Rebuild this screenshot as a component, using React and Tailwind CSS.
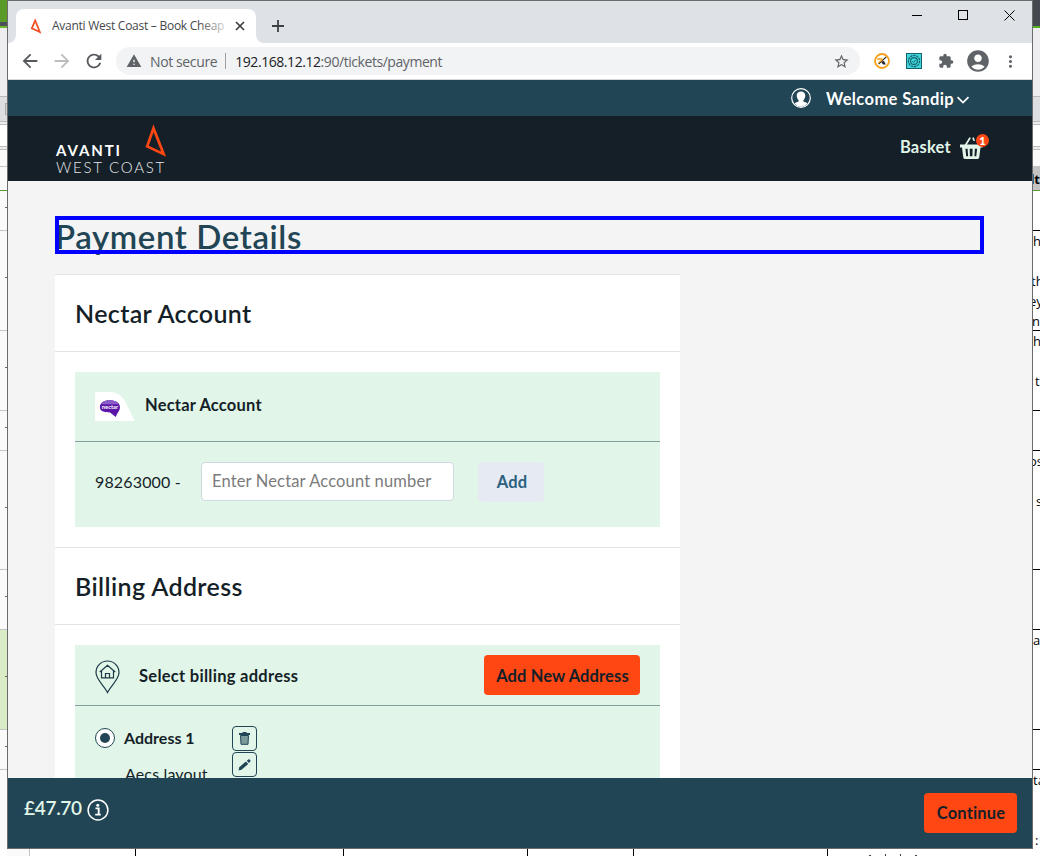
import React from 'react';
import {
  MdArrowBack,
  MdArrowForward,
  MdRefresh,
  MdWarning,
  MdStarBorder,
  MdExtension,
  MdAccountCircle,
  MdMoreVert,
} from 'react-icons/md';

/* ---------- spreadsheet visible behind the browser window ---------- */

const LEFT_ROWS = [
  ['h-[22px]', 'bg-[#5a9a28]'],
  ['h-[4px]', 'bg-[#4b4f57]'],
  ['h-[2px]', 'bg-[#6cb52d]'],
  ['h-[68px]', 'bg-[#ededef]'],
  ['h-[1px]', 'bg-[#b9b9bb]'],
  ['h-[24px]', 'bg-[#dddee2]'],
  ['h-[1px]', 'bg-[#bcbcbe]'],
  ['h-[2px]', 'bg-[#ececee]'],
  ['h-[1px]', 'bg-[#bcbcbe]'],
  ['h-[21px]', 'bg-white'],
  ['h-[1px]', 'bg-[#bcbcbe]'],
  ['h-[2px]', 'bg-[#ececee]'],
  ['h-[1px]', 'bg-[#bcbcbe]'],
  ['h-[16px]', 'bg-[#fafafa]'],
  ['h-[1px]', 'bg-[#c4c4c4]'],
  ['h-[23px]', 'bg-[#fafafa]'],
  ['h-[1px]', 'bg-[#5a9a28]'],
  ['h-[39px]', 'bg-[#fafafa]'],
  ['h-[1px]', 'bg-[#c4c4c4]'],
  ['h-[99px]', 'bg-[#fafafa]'],
  ['h-[1px]', 'bg-[#c4c4c4]'],
  ['h-[79px]', 'bg-[#fafafa]'],
  ['h-[1px]', 'bg-[#c4c4c4]'],
  ['h-[39px]', 'bg-[#fafafa]'],
  ['h-[1px]', 'bg-[#c4c4c4]'],
  ['h-[118px]', 'bg-[#fafafa]'],
  ['h-[1px]', 'bg-[#c4c4c4]'],
  ['h-[59px]', 'bg-[#fafafa]'],
  ['h-[1px]', 'bg-[#c4c4c4]'],
  ['h-[99px]', 'bg-[#d9ecc6]'],
  ['h-[1px]', 'bg-[#c4c4c4]'],
  ['h-[39px]', 'bg-[#fafafa]'],
  ['h-[1px]', 'bg-[#c4c4c4]'],
  ['h-[79px]', 'bg-[#fafafa]'],
];

const RIGHT_ROWS = [
  ['h-[26px]', 'bg-[#444950]'],
  ['h-[2px]', 'bg-[#56b01e]'],
  ['h-[68px]', 'bg-[#ededef]'],
  ['h-[1px]', 'bg-[#b9b9bb]'],
  ['h-[24px]', 'bg-[#dddee2]'],
  ['h-[1px]', 'bg-[#bcbcbe]'],
  ['h-[2px]', 'bg-[#ececee]'],
  ['h-[1px]', 'bg-[#bcbcbe]'],
  ['h-[21px]', 'bg-white'],
  ['h-[1px]', 'bg-[#bcbcbe]'],
  ['h-[2px]', 'bg-[#ececee]'],
  ['h-[1px]', 'bg-[#bcbcbe]'],
  ['h-[16px]', 'bg-[#fafafa]'],
  ['h-[24px]', 'bg-[#c3c3c3]'],
  ['h-[1px]', 'bg-[#5a9a28]'],
  ['h-[39px]', 'bg-white'],
  ['h-[1px]', 'bg-black'],
  ['h-[99px]', 'bg-white'],
  ['h-[1px]', 'bg-black'],
  ['h-[79px]', 'bg-white'],
  ['h-[1px]', 'bg-black'],
  ['h-[39px]', 'bg-white'],
  ['h-[1px]', 'bg-black'],
  ['h-[118px]', 'bg-white'],
  ['h-[1px]', 'bg-black'],
  ['h-[59px]', 'bg-white'],
  ['h-[1px]', 'bg-black'],
  ['h-[99px]', 'bg-white'],
  ['h-[1px]', 'bg-black'],
  ['h-[39px]', 'bg-white'],
  ['h-[1px]', 'bg-black'],
  ['h-[79px]', 'bg-white'],
];

const ROW_MARKS = [
  'top-[207px]', 'top-[277px]', 'top-[367px]', 'top-[427px]',
  'top-[507px]', 'top-[596px]', 'top-[676px]', 'top-[746px]',
];

const CELL_TEXT = [
  ['lt', 'top-[170px] right-0 font-bold'],
  ['h', 'top-[232px] left-0'],
  ['th', 'top-[272px] left-[-2px]'],
  ['ey', 'top-[292px] left-[-4px]'],
  ['n', 'top-[312px] left-[-1px]'],
  ['h', 'top-[332px] left-0'],
  ['t', 'top-[372px] left-[2px]'],
  ['os', 'top-[452px] left-[-4px]'],
  ['s', 'top-[492px] left-[3px]'],
  ['a', 'top-[631px] left-0'],
  ['ta', 'top-[771px] left-0'],
  [':', 'top-[831px] left-[2px]'],
];

function Rows({ rows }) {
  return rows.map(([h, bg], i) => <div key={i} className={`${h} ${bg} shrink-0`} />);
}

function SheetLeft() {
  return (
    <div className="relative flex w-[7px] shrink-0 flex-col overflow-hidden">
      <Rows rows={LEFT_ROWS} />
      <div className="absolute left-[5px] top-[103px] h-3 w-1 border border-[#a9a9ab] bg-[#cfcfd2]" />
      {ROW_MARKS.map((top) => (
        <div key={top} className={`absolute left-[5px] h-px w-[2px] bg-[#6d6552] ${top}`} />
      ))}
    </div>
  );
}

function SheetRight() {
  return (
    <div className="relative flex w-[7px] shrink-0 flex-col overflow-hidden">
      <Rows rows={RIGHT_ROWS} />
      {CELL_TEXT.map(([t, cls], i) => (
        <span
          key={i}
          className={`absolute whitespace-nowrap font-['Open_Sans',sans-serif] text-[13px] leading-[18px] text-black ${cls}`}
        >
          {t}
        </span>
      ))}
    </div>
  );
}

function SheetBottom() {
  return (
    <div className="flex h-[7px] bg-white">
      <div className="w-[22px] bg-[#fafafa]" />
      <div className="w-px bg-[#c4c4c4]" />
      <div className="w-[105px]" />
      <div className="w-px bg-black" />
      <div className="w-[207px]" />
      <div className="w-px bg-black" />
      <div className="w-[183px]" />
      <div className="w-px bg-black" />
      <div className="w-[105px]" />
      <div className="w-px bg-black" />
      <div className="w-[193px]" />
      <div className="w-px bg-black" />
      <div className="flex items-end gap-[14px] pl-[41px]">
        <div className="h-px w-[2px] bg-[#444]" />
        <div className="h-[2px] w-px bg-[#444]" />
        <div className="h-[2px] w-px bg-[#444]" />
        <div className="h-px w-[2px] bg-[#444]" />
      </div>
    </div>
  );
}

/* ---------- browser chrome ---------- */

function Flare({ flip }) {
  return (
    <svg
      width="8"
      height="8"
      viewBox="0 0 8 8"
      className={flip ? 'absolute -right-2 bottom-0 -scale-x-100' : 'absolute -left-2 bottom-0'}
    >
      <path d="M8 0v8H0a8 8 0 0 0 8-8z" fill="#fff" />
    </svg>
  );
}

function TabStrip() {
  return (
    <div className="flex h-[42px] shrink-0 bg-[#dee1e6] pl-2">
      <div className="relative mt-2 flex w-60 items-center rounded-t-lg bg-white">
        <Flare />
        <svg width="12" height="18" viewBox="0 0 12 18" className="ml-[14px]" fill="none" stroke="#f4502a" strokeWidth="1.8">
          <path d="M5.2 3.5 9.8 15 1.8 11.4z" />
        </svg>
        <div className="relative ml-[10px] w-[174px] overflow-hidden whitespace-nowrap font-['Open_Sans',sans-serif] text-[12px] leading-[18px] tracking-[-0.26px] text-[#45474a]">
          Avanti West Coast – Book Cheap
          <div className="absolute inset-y-0 right-0 w-7 bg-gradient-to-r from-transparent to-white/80" />
        </div>
        <svg width="10" height="10" viewBox="0 0 10 10" className="ml-[9px]" stroke="#3c4043" strokeWidth="1.7">
          <path d="M1 1l8 8M9 1L1 9" />
        </svg>
        <Flare flip />
      </div>
      <svg width="12" height="12" viewBox="0 0 12 12" className="ml-4 mt-[19px]" stroke="#3c4043" strokeWidth="1.8">
        <path d="M6 0v12M0 6h12" />
      </svg>
      <div className="ml-auto flex h-7">
        <div className="flex w-[46px] items-center justify-center">
          <div className="h-px w-[10px] bg-black" />
        </div>
        <div className="flex w-[46px] items-center justify-center">
          <div className="size-[10px] border border-black" />
        </div>
        <div className="flex w-[46px] items-center justify-center">
          <svg width="11" height="11" viewBox="0 0 11 11" stroke="#000" strokeWidth="1">
            <path d="M.5.5l10 10M10.5.5l-10 10" />
          </svg>
        </div>
      </div>
    </div>
  );
}

function Slot({ children }) {
  return <div className="flex w-8 shrink-0 items-center justify-center">{children}</div>;
}

function Toolbar() {
  return (
    <div className="flex h-[37px] shrink-0 items-center border-b border-[#d5d7da] bg-white px-[6px] text-[#5f6368]">
      <Slot><MdArrowBack size={22} color="#55585d" /></Slot>
      <Slot><MdArrowForward size={22} color="#babcbe" /></Slot>
      <Slot><MdRefresh size={22} color="#55585d" /></Slot>
      <div className="mx-[6px] flex h-7 flex-1 items-center rounded-full bg-[#f1f3f4] pl-[10px] pr-[10px] font-['Open_Sans',sans-serif] text-[14px]">
        <MdWarning size={16} />
        <span className="ml-2 tracking-[-0.38px]">Not secure</span>
        <div className="ml-[8px] h-4 w-px bg-[#9aa0a6]" />
        <span className="ml-[9px] tracking-[-0.44px]">
          <span className="text-[#202124]">192.168.12.12</span>:90/tickets/payment
        </span>
        <MdStarBorder size={17} className="ml-auto" />
      </div>
      <Slot>
        <svg width="16" height="16" viewBox="0 0 16 16">
          <circle cx="8" cy="8" r="7" fill="#fff" stroke="#f9a01b" strokeWidth="1.8" />
          <path d="M3.200 6h5.200" stroke="#f9a01b" strokeWidth="1.6" />
          <path d="M12.300 3.800 4.600 11" stroke="#222" strokeWidth="1.1" />
          <path d="M7.200 8.800 10 8l1.800 3.400H9z" fill="#222" />
          <path d="M4.400 9.800 8.600 6.600" stroke="#f9a01b" strokeWidth="1.2" />
        </svg>
      </Slot>
      <Slot>
        <svg width="16" height="16" viewBox="0 0 16 16">
          <rect x=".5" y=".5" width="15" height="15" fill="#3fd6dc" stroke="#17606b" />
          <circle cx="8" cy="8" r="5.6" fill="none" stroke="#17606b" strokeWidth="1.2" strokeDasharray="2.4 .7" />
          <circle cx="8" cy="8" r="3.4" fill="none" stroke="#17606b" strokeWidth="1.1" />
          <path d="M6.4 8.2 7.6 9.4 9.8 6.8" fill="none" stroke="#17606b" />
        </svg>
      </Slot>
      <Slot><MdExtension size={16} /></Slot>
      <Slot><MdAccountCircle size={26} /></Slot>
      <Slot><MdMoreVert size={19} /></Slot>
    </div>
  );
}

/* ---------- Avanti site ---------- */

function UserIcon() {
  return (
    <svg width="20" height="20" viewBox="0 0 20 20">
      <circle cx="10" cy="10" r="9.3" fill="none" stroke="#fff" strokeWidth="1.2" />
      <path
        fill="#fff"
        d="M10 3.600c2.700 0 4.400 1.700 4.300 4.200 0 1.900-.9 3.400-1.900 4.400v1.400c1.300.7 2.900.9 4 1.900-1.500 2-3.900 3.300-6.400 3.300s-4.900-1.300-6.400-3.300c1.100-1 2.700-1.200 4-1.900v-1.400C6.600 11.200 5.700 9.700 5.700 7.800c-.1-2.500 1.600-4.200 4.300-4.200z"
      />
    </svg>
  );
}

function WelcomeBar() {
  return (
    <div className="flex h-9 shrink-0 items-center justify-end bg-[#214554] pr-[62px] text-white">
      <UserIcon />
      <span className="ml-[15px] mt-px text-[16.5px] font-bold leading-6 tracking-[0.38px]">Welcome Sandip</span>
      <svg width="14" height="8" viewBox="0 0 14 8" className="ml-[2px] mt-[3px]" fill="none" stroke="#fff" strokeWidth="1.7">
        <path d="M1.500 1.200 7 6.500l5.500-5.300" />
      </svg>
    </div>
  );
}

function BasketIcon() {
  return (
    <svg width="24" height="24" viewBox="0 0 24 24" fill="none">
      <path d="M5.300 9.500 9.800 2.200M13.200 2.200l.8 2" stroke="#e1f5e8" strokeWidth="1.700" strokeLinecap="round" />
      <path
        fill="#e1f5e8"
        fillRule="evenodd"
        d="M0 8.400h22.500v3H20.500l-1.300 10.200c-.1.900-.7 1.400-1.600 1.400H4.900c-.9 0-1.500-.5-1.600-1.400L2 11.400H0zM5.400 12.700l.8 7.600h1.900l-.5-7.600zm4.300 0 .2 7.600h2.500l.2-7.600zm5.200 0-.5 7.600h1.900l.8-7.600z"
      />
    </svg>
  );
}

function NavBar() {
  return (
    <div className="flex h-[65px] shrink-0 justify-between bg-[#151f28] pl-12 pr-[48px] text-white">
      <div className="relative mt-[26px] w-[111px] text-[15px] leading-4">
        <div className="font-bold tracking-[1.9px]">AVANTI</div>
        <div className="whitespace-nowrap pt-px font-light tracking-[1.750px] text-[#e6e8e9]">WEST COAST</div>
        <svg width="22" height="34" viewBox="0 0 22 34" className="absolute -top-[18px] left-[89px]" fill="none" stroke="#ff4713" strokeWidth="2.700">
          <path d="M8.500 4.200 18.700 30.200 2.200 22.400z" />
        </svg>
      </div>
      <div className="relative mt-[20px] flex h-6 text-[#e1f5e8]">
        <span className="text-[16.5px] font-bold leading-[23px] tracking-[0.25px]">Basket</span>
        <span className="ml-[9px]"><BasketIcon /></span>
        <span className="absolute -right-[5px] -top-[2px] flex size-[13px] items-center justify-center rounded-full bg-[#ff4713] text-[11px] font-black leading-none text-white">
          1
        </span>
      </div>
    </div>
  );
}

function SectionTitle({ children, className }) {
  return (
    <div className={`flex h-[78px] items-center border-y border-[#e4e4e4] pl-5 text-[25px] font-semibold ${className}`}>
      {children}
    </div>
  );
}

function NectarLogo() {
  return (
    <div className="flex h-[29px] w-10 items-center">
      <svg width="40" height="29" viewBox="0 0 40 29">
        <path d="M0 0h15c8 0 12.500 4 16.500 12L39.800 29H0z" fill="#fff" />
        <path
          d="M14.500 8.200c6 0 10.500 2.600 10.500 7 0 2.600-1.600 4.600-2.700 6.300L20.700 25l-5.600-4.600c-6 0-10.200-1-10.200-5.400 0-4.200 4-6.800 9.600-6.800z"
          fill="#5b16a8"
        />
        <path d="M14.500 8.200c4.500 0 8 1.400 9.600 4H5.700c1.600-2.600 4.900-4 8.800-4z" fill="#8a5cc6" />
        <text x="6.800" y="17.200" fontSize="5.800" fontWeight="700" fill="#fff" fontFamily="Lato, sans-serif">nectar</text>
      </svg>
    </div>
  );
}

function NectarPanel() {
  return (
    <div className="px-5 py-5">
      <div className="h-[155px] bg-[#e1f5e8]">
        <div className="flex h-[70px] items-center border-b border-[#819f9c] pl-5">
          <NectarLogo />
          <span className="mb-[4px] ml-[10px] text-[16.5px] font-bold tracking-[0.2px]">Nectar Account</span>
        </div>
        <div className="flex items-start pl-5 pt-5">
          <span className="w-[106px] pt-2 tracking-[0.15px]">98263000 -</span>
          <input
            placeholder="Enter Nectar Account number"
            className="h-[39px] w-[253px] rounded border border-[#ced9e2] bg-white px-[10px] pb-px text-[16.5px] tracking-[0.15px] outline-none placeholder:text-[#7b7b7b]"
          />
          <button className="ml-6 h-10 w-[66px] rounded bg-[#e6eaf3] pb-px pl-[2px] text-[16.5px] font-bold tracking-[0.2px] text-[#2b617f]">
            Add
          </button>
        </div>
      </div>
    </div>
  );
}

function PinIcon() {
  return (
    <svg width="26" height="34" viewBox="0 0 26 34" className="mt-1" fill="none" stroke="#1c3a48" strokeWidth="1.200">
      <path d="M12.500 32.500C9.500 26 1 19.500 1 12.500a11.500 11.500 0 0 1 23 0c0 7-8.500 13.500-11.500 20z" />
      <path d="M4.800 12 12.500 5.200 20.200 12M6.500 11v6.800h12V11M10.500 17.800v-4.300h4v4.300" />
    </svg>
  );
}

function IconButton({ children }) {
  return (
    <button className="flex size-[25px] items-center justify-center rounded border border-[#214554]">{children}</button>
  );
}

function BillingPanel() {
  return (
    <div className="px-5 pt-5">
      <div className="h-[200px] bg-[#e1f5e8]">
        <div className="flex h-[61px] items-center border-b border-[#819f9c] pl-5 pr-5">
          <PinIcon />
          <span className="ml-[18px] mt-px text-[16.5px] font-bold tracking-[0.28px]">Select billing address</span>
          <button className="ml-auto h-10 w-[156px] rounded bg-[#ff4713] pl-px pt-px text-[16.5px] font-bold tracking-[0.12px] text-[#151f28]">
            Add New Address
          </button>
        </div>
        <div className="flex pl-5 pt-5">
          <div className="w-[137px]">
            <div className="flex items-start">
              <div className="mt-[2px] flex size-5 items-center justify-center rounded-full border border-[#214554] bg-white">
                <div className="size-[10px] rounded-full bg-[#214554]" />
              </div>
              <span className="ml-[9px] font-bold">Address 1</span>
            </div>
            <div className="pl-[30px] pt-[12px] tracking-[0.15px]">Aecs layout</div>
          </div>
          <div className="flex flex-col gap-px">
            <IconButton>
              <svg width="11" height="13" viewBox="0 0 11 13">
                <path d="M3.500 0h4v1H11v2H0V1h3.500z" fill="#214554" />
                <path d="M1.500 3.500h8l-.5 8.800h-7z" fill="#7b9a9c" stroke="#214554" />
              </svg>
            </IconButton>
            <IconButton>
              <svg width="13" height="13" viewBox="0 0 13 13" fill="#214554">
                <path d="M.6 12.400 1.200 9.200 8 3.400l2.200 2.500L3.500 11.700zM8.800 2.700l1.500-1.300c.5-.4 1-.3 1.300 0l.8 1c.3.400.3.900-.1 1.200l-1.400 1.300z" />
              </svg>
            </IconButton>
          </div>
        </div>
      </div>
    </div>
  );
}

function Main() {
  return (
    <div className="h-[597px] shrink-0 overflow-hidden bg-[#f4f4f4] pl-[47px] pr-12 pt-[35px] text-[#151f28]">
      <h1 className="relative h-[38px] text-[33px] font-semibold leading-[40px] tracking-[0.6px] text-[#214554]">
        Payment Details
        <span className="absolute inset-0 border-4 border-[#0000ff]" />
      </h1>
      <div className="mt-5 w-[625px] bg-white text-base leading-6">
        <SectionTitle className="tracking-[0.36px]">Nectar Account</SectionTitle>
        <NectarPanel />
        <SectionTitle className="tracking-[0.38px]">Billing Address</SectionTitle>
        <BillingPanel />
      </div>
    </div>
  );
}

function Footer() {
  return (
    <div className="flex h-[70px] shrink-0 items-center bg-[#214554] pl-4 pr-[15px]">
      <span className="mb-[11px] text-[19px] font-semibold leading-6 tracking-[-0.3px] text-[#e1f5e8]">£47.70</span>
      <svg width="22" height="22" viewBox="0 0 22 22" className="mb-[6px] ml-[5px]" fill="none">
        <circle cx="11" cy="11" r="9.900" stroke="#fff" strokeWidth="1.500" />
        <circle cx="10.800" cy="6.200" r="1.500" fill="#fff" />
        <path d="M8.500 9.400h3.200v6M8.200 15.600h5.600" stroke="#fff" strokeWidth="1.900" />
      </svg>
      <button className="ml-auto h-10 w-[93px] rounded bg-[#ff4713] pl-px pt-px text-[16.5px] font-bold tracking-[0.15px] text-[#151f28]">
        Continue
      </button>
    </div>
  );
}

export default function App() {
  return (
    <div className="flex h-[856px] w-[1040px] overflow-hidden bg-white font-[Lato,sans-serif]">
      <SheetLeft />
      <div className="flex w-[1026px] shrink-0 flex-col">
        <div className="flex h-[849px] shrink-0 flex-col border border-[#6b6b6b]">
          <TabStrip />
          <Toolbar />
          <WelcomeBar />
          <NavBar />
          <Main />
          <Footer />
        </div>
        <SheetBottom />
      </div>
      <SheetRight />
    </div>
  );
}
